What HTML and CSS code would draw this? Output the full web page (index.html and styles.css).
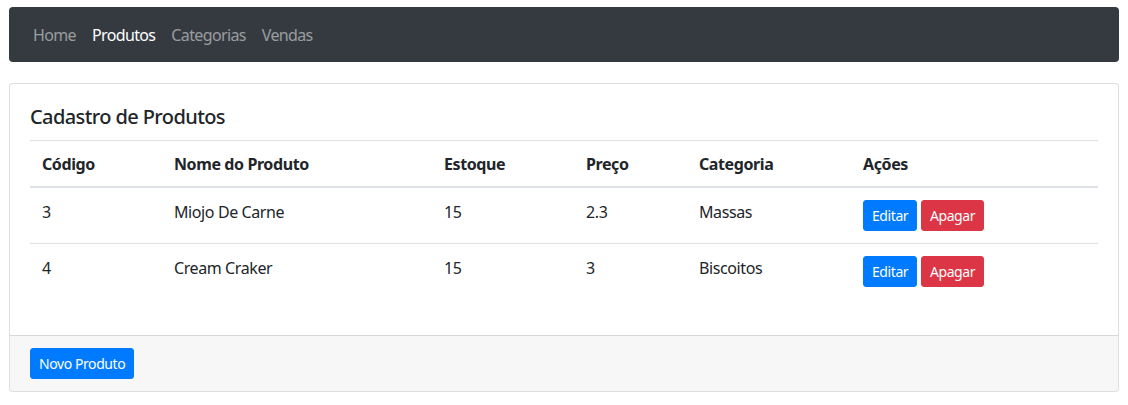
FILE: index.html
```html
<!DOCTYPE html>
<html lang="pt-BR">
<head>
<meta charset="utf-8">
<title>Cadastro de Produtos</title>
<link rel="stylesheet" href="styles.css">
</head>
<body>
<div class="page">
  <nav class="navbar">
    <a class="nav-link" href="#">Home</a>
    <a class="nav-link active" href="#">Produtos</a>
    <a class="nav-link" href="#">Categorias</a>
    <a class="nav-link" href="#">Vendas</a>
  </nav>
  <div class="card">
    <div class="card-body">
      <h5 class="card-title">Cadastro de Produtos</h5>
      <table class="table">
        <thead>
          <tr>
            <th class="c-cod">Código</th>
            <th class="c-nome">Nome do Produto</th>
            <th class="c-est">Estoque</th>
            <th class="c-preco">Preço</th>
            <th class="c-cat">Categoria</th>
            <th class="c-acoes">Ações</th>
          </tr>
        </thead>
        <tbody>
          <tr>
            <td>3</td>
            <td>Miojo De Carne</td>
            <td>15</td>
            <td>2.3</td>
            <td>Massas</td>
            <td><button class="btn btn-primary">Editar</button> <button class="btn btn-danger">Apagar</button></td>
          </tr>
          <tr>
            <td>4</td>
            <td>Cream Craker</td>
            <td>15</td>
            <td>3</td>
            <td>Biscoitos</td>
            <td><button class="btn btn-primary">Editar</button> <button class="btn btn-danger">Apagar</button></td>
          </tr>
        </tbody>
      </table>
    </div>
    <div class="card-footer">
      <button class="btn btn-primary">Novo Produto</button>
    </div>
  </div>
</div>
</body>
</html>
```

FILE: styles.css
```css
* { box-sizing: border-box; }
body {
  margin: 0;
  font-family: "Noto Sans", "Open Sans", sans-serif;
  font-size: 16px;
  line-height: 1.5;
  letter-spacing: -0.025em;
  color: #212529;
  background: #fff;
}
.page { padding: 7px 9px; }
.navbar {
  display: flex;
  align-items: center;
  background: #343a40;
  border-radius: 4px;
  padding: 8px 16px;
  height: 55px;
}
.nav-link {
  display: block;
  padding: 8px;
  color: rgba(255,255,255,.5);
  text-decoration: none;
  font-size: 16px;
  line-height: 24px;
  letter-spacing: -0.04em;
}
.nav-link.active { color: #fff; }
.card {
  margin-top: 21px;
  border: 1px solid rgba(0,0,0,.125);
  border-radius: 4px;
  background: #fff;
}
.card-body { padding: 20px; }
.card-title {
  margin: 0 0 12px;
  padding-top: 1px;
  font-size: 20px;
  font-weight: 500;
  line-height: 23px;
  letter-spacing: -0.03em;
}
.table {
  width: 100%;
  border-collapse: collapse;
  margin-bottom: 16px;
}
.table th, .table td {
  padding: 12px;
  text-align: left;
  vertical-align: top;
  border-top: 1px solid #dee2e6;
  line-height: 24px;
}
.table thead th {
  font-weight: 700;
  line-height: 21px;
  padding: 13px 12px 11px;
  border-bottom: 2px solid #dee2e6;
  vertical-align: bottom;
}
.c-cod { width: 132px; }
.c-nome { width: 270px; }
.c-est { width: 142px; }
.c-preco { width: 113px; }
.c-cat { width: 164px; }
.btn {
  display: inline-block;
  font-family: inherit;
  font-size: 14px;
  line-height: 21px;
  letter-spacing: -0.03em;
  padding: 4px 8px;
  border: 1px solid transparent;
  border-radius: 3px;
  color: #fff;
  cursor: pointer;
  vertical-align: middle;
}
.btn-primary { background: #007bff; border-color: #007bff; }
.btn-danger { background: #dc3545; border-color: #dc3545; }
.card-footer {
  background: rgba(0,0,0,.03);
  border-top: 1px solid rgba(0,0,0,.125);
  padding: 12px 20px;
  border-radius: 0 0 4px 4px;
}
```
